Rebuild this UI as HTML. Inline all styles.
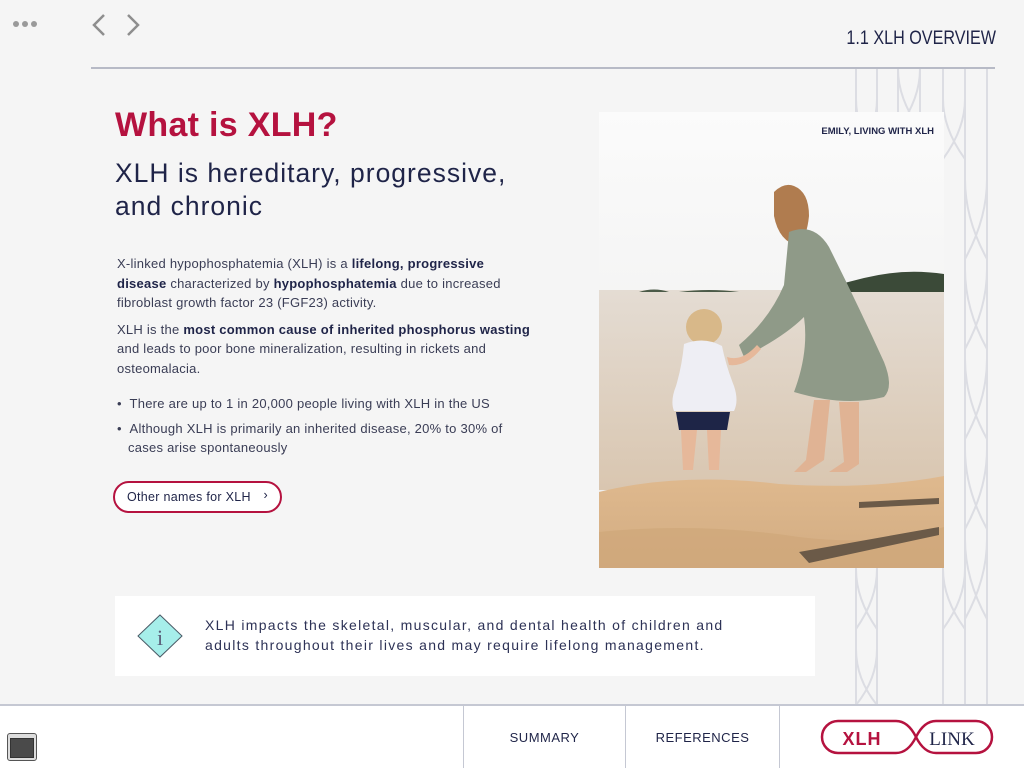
<!DOCTYPE html>
<html><head><meta charset="utf-8"><style>
*{margin:0;padding:0;box-sizing:border-box}
body{width:1024px;height:768px;overflow:hidden;background:#f5f5f5;font-family:"Liberation Sans",sans-serif;position:relative;color:#1f2448}
.a{position:absolute}
p.b{font-size:13px;line-height:19.5px;color:#3a3d55;letter-spacing:.25px}
p.b b{color:#1f2448}
</style></head><body>
<div class="a" style="left:13px;top:21px;font-size:0">
<span style="display:inline-block;width:6px;height:6px;border-radius:50%;background:#9a9a9a;margin-right:3px"></span><span style="display:inline-block;width:6px;height:6px;border-radius:50%;background:#9a9a9a;margin-right:3px"></span><span style="display:inline-block;width:6px;height:6px;border-radius:50%;background:#9a9a9a"></span></div>
<svg class="a" style="left:88px;top:12px" width="60" height="26"><path d="M16 3 L6 13 L16 23" fill="none" stroke="#8e8e8e" stroke-width="2.5"/><path d="M40 3 L50 13 L40 23" fill="none" stroke="#8e8e8e" stroke-width="2.5"/></svg>
<div class="a" style="right:28px;top:28px;font-size:19px;color:#1f2448;transform:scaleX(.85);transform-origin:right">1.1 XLH OVERVIEW</div>
<div class="a" style="left:91px;top:67px;width:904px;height:2px;background:#b7bac6"></div>
<svg class="a" style="left:850px;top:69px" width="150" height="636" fill="none" stroke="#dcdde3" stroke-width="2">
<path d="M6 0V636M27 0V636M48 0V120M70 0V120M93 0V636M115 0V636M137 0V636"/>
<path d="M48 0 q0 30 22 60 M70 0 q0 30 -22 60 M48 60 q0 30 22 60 M70 60 q0 30 -22 60"/>
<path d="M6 30 q0 30 21 60 M27 30 q0 30 -21 60 M93 30 q0 30 22 60 M115 30 q0 30 -22 60"/>
<path d="M115 110 q0 40 22 80 M137 110 q0 40 -22 80 M115 200 q0 40 22 80 M137 200 q0 40 -22 80 M115 290 q0 40 22 80 M137 290 q0 40 -22 80 M115 380 q0 40 22 80 M137 380 q0 40 -22 80 M115 470 q0 40 22 80 M137 470 q0 40 -22 80"/>
<path d="M93 500 q0 30 22 60 M115 500 q0 30 -22 60 M6 500 q0 30 21 60 M27 500 q0 30 -21 60 M6 580 q0 30 21 56 M27 580 q0 30 -21 56"/>
</svg>
<div class="a" style="left:115px;top:106px;font-size:34px;font-weight:bold;color:#b5123f;letter-spacing:.3px">What is XLH?</div>
<div class="a" style="left:115px;top:157px;font-size:26.5px;line-height:33px;color:#1f2448;letter-spacing:1px">XLH is hereditary, progressive,<br>and chronic</div>
<div class="a" style="left:117px;top:254px;width:416px">
<p class="b">X-linked hypophosphatemia (XLH) is a <b>lifelong, progressive disease</b> characterized by <b>hypophosphatemia</b> due to increased fibroblast growth factor 23 (FGF23) activity.</p>
<p class="b" style="margin-top:7px">XLH is the <b>most common cause of inherited phosphorus wasting</b> and leads to poor bone mineralization, resulting in rickets and osteomalacia.</p>
</div>
<div class="a" style="left:117px;top:394px;width:400px">
<p class="b">•&nbsp;&nbsp;There are up to 1 in 20,000 people living with XLH in the US</p>
<p class="b" style="margin-top:5px;padding-left:11px;text-indent:-11px">•&nbsp;&nbsp;Although XLH is primarily an inherited disease, 20% to 30% of cases arise spontaneously</p>
</div>
<div class="a" style="left:113px;top:481px;width:169px;height:32px;border:2px solid #b5123f;border-radius:16px;background:#fff;font-size:12.5px;color:#1f2448;padding:7px 0 0 12px;letter-spacing:.3px">Other names for XLH<span style="position:absolute;right:12px;top:5px">&#x203A;</span></div>
<svg class="a" style="left:599px;top:112px" width="345" height="456">
<defs>
<linearGradient id="sky" x1="0" y1="0" x2="0" y2="1"><stop offset="0" stop-color="#fbfbfb"/><stop offset="1" stop-color="#ebebea"/></linearGradient>
<linearGradient id="w" x1="0" y1="0" x2="0" y2="1"><stop offset="0" stop-color="#e4dcd3"/><stop offset="1" stop-color="#d9c6b0"/></linearGradient>
<linearGradient id="s" x1="0" y1="0" x2="0" y2="1"><stop offset="0" stop-color="#dfb98e"/><stop offset="1" stop-color="#d2ac82"/></linearGradient>
</defs>
<rect width="345" height="456" fill="url(#sky)"/>
<rect y="178" width="345" height="200" fill="url(#w)"/>
<path d="M210 180 h135 v-18 q-40-6-80 4z" fill="#3b4a38"/>
<path d="M40 180 q15-5 30 0z M80 180 q30-4 60 0z" fill="#4b5a48"/>
<path d="M0 380 q80-20 180-8 q90 6 165-8 V456H0z" fill="url(#s)"/>
<path d="M0 420 q100-10 200 5 q80 10 145-10 V456H0z" fill="#cfa679" opacity=".7"/>
<path d="M200 440 l140-25 v8 l-130 28z M260 390 l80 -4 v6 l-80 4z" fill="#6b5a48"/>
<path d="M175 80 q10-10 20 -6 q15 6 15 30 q-2 20 -10 30 q-20 -4 -25 -30z" fill="#b07c4f"/>
<path d="M190 120 q25-10 40 15 q30 60 55 115 q10 25 0 35 q-40 10-90 -5 q15-40 10-75 q-20 20 -60 40 l-5 -12 q30-25 45-60z" fill="#8f9a88"/>
<path d="M215 288 l-8 60 l-12 12 h12 l18-12 l6-60z M240 290 l5 60 l-15 10 h18 l12-8 v-62z" fill="#e0b394"/>
<circle cx="105" cy="215" r="18" fill="#d8b889"/>
<path d="M85 232 q20-8 38 2 q4 20 12 40 q5 15 0 25 h-60 q-4-10 2-25 q6-20 8-42z" fill="#eeeef4"/>
<path d="M77 300 h54 l-3 18 h-48z" fill="#1e2547"/>
<path d="M82 318 l2 40 h10 l4-40z M108 318 l2 40 h10 l2-40z" fill="#e6b89a"/>
<path d="M128 245 q15 5 30-12 l4 4 q-15 18-32 16z" fill="#e6b89a"/>
<text x="335" y="22" text-anchor="end" font-family="Liberation Sans" font-weight="bold" font-size="9.5" fill="#1f2448">EMILY, LIVING WITH XLH</text>
</svg>
<div class="a" style="left:115px;top:596px;width:700px;height:80px;background:#fff"></div>
<svg class="a" style="left:136px;top:613px" width="48" height="46"><path d="M24 2 L46 23 L24 44 L2 23Z" fill="#a6eeea" stroke="#4a5a66" stroke-width="1"/><text x="24" y="32" text-anchor="middle" font-family="Liberation Serif" font-size="22" fill="#5b5f7a">i</text></svg>
<div class="a" style="left:205px;top:615px;font-size:14px;line-height:20px;color:#2d3256;letter-spacing:1.3px;white-space:nowrap">XLH impacts the skeletal, muscular, and dental health of children and<br>adults throughout their lives and may require lifelong management.</div>
<div class="a" style="left:0;top:704px;width:1024px;height:64px;background:#fff;border-top:2px solid #c5c8d3"></div>
<div class="a" style="left:463px;top:705px;width:1px;height:63px;background:#c5c8d3"></div>
<div class="a" style="left:625px;top:705px;width:1px;height:63px;background:#c5c8d3"></div>
<div class="a" style="left:779px;top:705px;width:1px;height:63px;background:#c5c8d3"></div>
<div class="a" style="left:464px;top:730px;width:161px;text-align:center;font-size:13px;color:#1f2448;letter-spacing:.5px">SUMMARY</div>
<div class="a" style="left:626px;top:730px;width:153px;text-align:center;font-size:13px;color:#1f2448;letter-spacing:.5px">REFERENCES</div>
<svg class="a" style="left:818px;top:719px" width="180" height="36"><path d="M20 2 H78 Q90 2 98 18 Q106 34 118 34 H158 A16 16 0 0 0 158 2 H118 Q106 2 98 18 Q90 34 78 34 H20 A16 16 0 0 1 20 2Z" fill="none" stroke="#b5123f" stroke-width="2.5"/><text x="44" y="26" text-anchor="middle" font-family="Liberation Sans" font-weight="bold" font-size="18" fill="#b5123f" letter-spacing="1">XLH</text><text x="134" y="26" text-anchor="middle" font-family="Liberation Serif" font-size="19" fill="#1f2448">LINK</text></svg>
<div class="a" style="left:7px;top:733px;width:30px;height:28px;border:1px solid #555;border-radius:3px;background:#ddd"><div style="margin:4px 2px 2px;height:20px;background:#4a4a4a;border:1px solid #333"></div></div>
</body></html>
